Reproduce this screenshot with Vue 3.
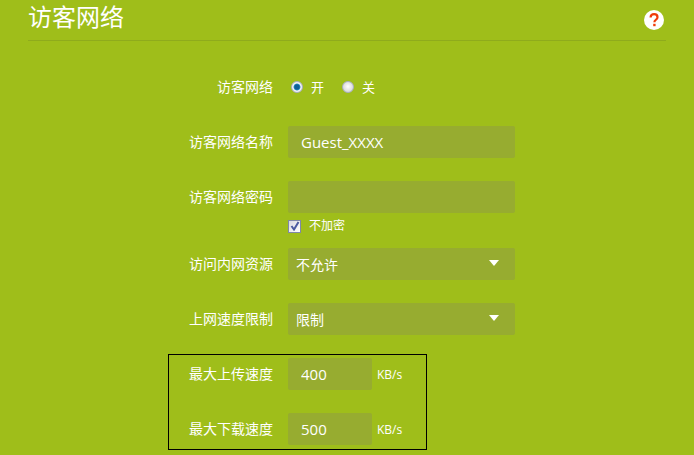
<script setup>
import { ref } from 'vue'

const guestOn = ref(true)
const ssid = ref('Guest_XXXX')
const password = ref('')
const noEncrypt = ref(true)
const upload = ref('400')
const download = ref('500')
</script>

<template>
  <div class="page">
    <div class="title-bar">
      <h1 class="title">访客网络</h1>
      <div class="help">
        <svg width="20" height="20" viewBox="0 0 20 20">
          <circle cx="10" cy="10" r="10" fill="#fff" />
          <path d="M6.6 7.6c0-2.2 1.5-3.4 3.5-3.4s3.4 1.2 3.4 3c0 2.6-3.1 2.5-3.1 5" fill="none" stroke="#f03c0a" stroke-width="2.2" />
          <rect x="9.2" y="13.8" width="2.4" height="2.4" fill="#f03c0a" />
        </svg>
      </div>
    </div>

    <div class="row radio-row">
      <label class="label">访客网络</label>
      <div class="radios">
        <span class="radio-item" @click="guestOn = true">
          <i class="radio" :class="{ on: guestOn }"></i>开
        </span>
        <span class="radio-item" @click="guestOn = false">
          <i class="radio" :class="{ on: !guestOn }"></i>关
        </span>
      </div>
    </div>

    <div class="row name-row">
      <label class="label">访客网络名称</label>
      <input v-model="ssid" class="field" />
    </div>

    <div class="row pwd-row">
      <label class="label">访客网络密码</label>
      <input v-model="password" class="field" />
    </div>

    <div class="check-row" @click="noEncrypt = !noEncrypt">
      <span class="checkbox">
        <svg v-if="noEncrypt" width="10" height="10" viewBox="0 0 10 10">
          <path d="M1.5 5l2.5 3.5L8.5 1" fill="none" stroke="#4a5aa0" stroke-width="2" />
        </svg>
      </span>
      不加密
    </div>

    <div class="row access-row">
      <label class="label">访问内网资源</label>
      <div class="select">不允许<i class="arrow"></i></div>
    </div>

    <div class="row limit-row">
      <label class="label">上网速度限制</label>
      <div class="select">限制<i class="arrow"></i></div>
    </div>

    <div class="speed-box">
      <div class="speed-row">
        <label class="label">最大上传速度</label>
        <input v-model="upload" class="field small" />
        <span class="unit">KB/s</span>
      </div>
      <div class="speed-row">
        <label class="label">最大下载速度</label>
        <input v-model="download" class="field small" />
        <span class="unit">KB/s</span>
      </div>
    </div>
  </div>
</template>

<style>
html,
body {
  margin: 0;
  height: 455px;
  overflow: hidden;
  background: #9fbe1a;
}
</style>

<style scoped>
.page {
  width: 694px;
  height: 455px;
  overflow: hidden;
  background: #9fbe1a;
  color: #fff;
  font-family: "Open Sans", "Noto Sans CJK SC", sans-serif;
  font-size: 13px;
}
.title-bar {
  display: flex;
  justify-content: space-between;
  margin: 0 28px;
  height: 40px;
  border-bottom: 1px solid #8fab1c;
}
.title {
  margin: 0;
  font-size: 24px;
  font-weight: 400;
  line-height: 33px;
}
.help {
  padding: 10px 0 0;
  margin-right: 2px;
}
.row {
  display: flex;
  align-items: center;
  margin-left: 168px;
  height: 32px;
}
.label {
  width: 105px;
  margin-right: 15px;
  text-align: right;
  font-size: 14px;
  line-height: 30px;
  flex: none;
}
.radio-row {
  margin-top: 30px;
}
.name-row {
  margin-top: 23px;
}
.pwd-row {
  margin-top: 23px;
}
.access-row {
  margin-top: 12px;
}
.limit-row {
  margin-top: 23px;
}
.radios {
  display: flex;
  margin-left: 3px;
}
.radio-item {
  display: flex;
  align-items: center;
  width: 51px;
  line-height: 30px;
  cursor: pointer;
}
.radio {
  width: 12px;
  height: 12px;
  margin-right: 8px;
  border-radius: 50%;
  box-sizing: border-box;
  border: 1px solid #a9afc4;
  background: radial-gradient(circle at 50% 45%, #fff, #c9c9c9);
}
.radio.on {
  background: radial-gradient(circle, #0f5f96 0, #0f5f96 32%, #2a8cc0 42%, #f4f4f8 55%, #e0e0ea);
}
.field {
  display: block;
  box-sizing: border-box;
  width: 227px;
  height: 32px;
  padding: 0 13px;
  border: none;
  border-radius: 2px;
  outline: none;
  background: #97ac30;
  color: #fff;
  font-family: inherit;
  font-size: 15px;
}
.field.small {
  width: 84px;
  flex: none;
}
.check-row {
  display: flex;
  align-items: center;
  height: 20px;
  margin: 3px 0 0 288px;
  font-size: 12px;
  line-height: 18px;
  cursor: pointer;
}
.checkbox {
  display: flex;
  align-items: center;
  justify-content: center;
  box-sizing: border-box;
  width: 13px;
  height: 13px;
  margin-right: 8px;
  border: 1px solid #8088a8;
  background: linear-gradient(135deg, #d8d8e0, #fff);
}
.select {
  display: flex;
  align-items: center;
  justify-content: space-between;
  box-sizing: border-box;
  width: 227px;
  height: 32px;
  padding: 0 16px 0 8px;
  border-radius: 2px;
  background: #97ac30;
  font-size: 14px;
}
.arrow {
  width: 0;
  height: 0;
  margin-top: -2px;
  border-left: 5px solid transparent;
  border-right: 5px solid transparent;
  border-top: 6px solid #fff;
}
.speed-box {
  box-sizing: border-box;
  width: 259px;
  height: 96px;
  margin: 19px 0 0 168px;
  padding-top: 3px;
  border: 1px solid #000;
}
.speed-row {
  display: flex;
  align-items: center;
  height: 32px;
  margin-bottom: 23px;
}
.speed-row .label {
  width: 104px;
}
.unit {
  margin-left: 5px;
  font-size: 12px;
}
</style>
